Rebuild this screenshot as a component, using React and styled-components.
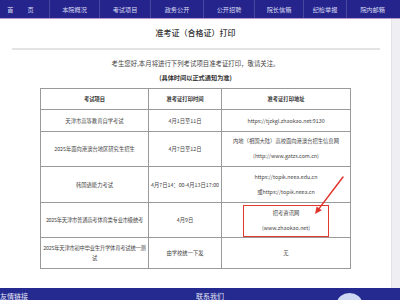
import React from "react";
import styled, { createGlobalStyle } from "styled-components";

const GlobalStyle = createGlobalStyle`
  html, body { margin: 0; padding: 0; background: #ffffff; }
  body {
    width: 400px;
    height: 300px;
    overflow: hidden;
    font-family: "Noto Sans CJK SC", "Noto Sans", sans-serif;
    color: #333;
  }
`;

const Page = styled.div`
  width: 400px;
  height: 300px;
  display: flex;
  flex-direction: column;
  overflow: hidden;
`;

const NavBar = styled.nav`
  height: 18px;
  flex: none;
  display: flex;
  background: #24248c;
  border-bottom: 1px solid #b896c8;
`;

const NavItem = styled.a`
  width: ${(p) => p.$w}px;
  flex: none;
  display: flex;
  align-items: center;
  justify-content: center;
  color: #d9daf2;
  font-size: 6.2px;
  letter-spacing: ${(p) => (p.$wide ? "14px" : "0")};
  text-indent: ${(p) => (p.$wide ? "6px" : "0")};
  border-right: ${(p) => (p.$last ? "none" : "1px solid rgba(255,255,255,0.16)")};
  text-decoration: none;
`;

const Main = styled.div`
  flex: 1;
  display: flex;
  min-height: 0;
`;

const Content = styled.div`
  position: relative;
  width: 391px;
  flex: none;
  background: #fff;
  display: flex;
  flex-direction: column;
`;

const SideStrip = styled.div`
  flex: 1;
  background: #efeff3;
  border-left: 1px solid #e2e2e8;
`;

const Title = styled.h1`
  margin: 0;
  padding: 9px 0 10px;
  font-size: 8px;
  line-height: 10px;
  font-weight: 500;
  text-align: center;
  color: #333;
`;

const Rule = styled.div`
  height: 2px;
  margin: 0 11px 0 12px;
  background: #e3e3e3;
`;

const Notice = styled.p`
  margin: 9px 0 0;
  font-size: 6.4px;
  line-height: 10px;
  text-align: center;
  color: #444;
`;

const Remark = styled.p`
  margin: 4px 0 0;
  font-size: 6.2px;
  line-height: 10px;
  font-weight: 700;
  text-align: center;
  color: #333;
`;

const Table = styled.table`
  margin: 5px auto 0;
  width: 310px;
  table-layout: fixed;
  border-collapse: collapse;
  border: 1px solid #9a9a9a;
`;

const Row = styled.tr`
  height: ${(p) => p.$h}px;
`;

const Cell = styled.td`
  border: 1px solid #9a9a9a;
  padding: 0 ${(p) => (p.$tight ? "1px" : "2px")};
  text-align: center;
  vertical-align: middle;
  font-size: 5.3px;
  letter-spacing: ${(p) => (p.$tight ? "-0.22px" : "0")};
  line-height: ${(p) => (p.$multi ? "15px" : "10px")};
  color: #444;
  white-space: ${(p) => (p.$nowrap ? "nowrap" : "normal")};
  overflow: visible;
`;

const HeadCell = styled(Cell).attrs({ as: "th" })`
  font-weight: 700;
  color: #333;
`;

const Line = styled.span`
  display: block;
`;

const Highlight = styled.div`
  width: 84px;
  margin: 2px auto 0;
  border: 1.5px solid #e0392e;
  line-height: 15px;
`;

const ArrowSvg = styled.svg`
  position: absolute;
  left: 300px;
  top: 150px;
  width: 60px;
  height: 70px;
  pointer-events: none;
`;

const Footer = styled.footer`
  height: 12px;
  flex: none;
  display: grid;
  grid-template-columns: 196px 141px 1fr;
  background: #252a90;
  overflow: hidden;
`;

const FooterTitle = styled.span`
  padding-top: 4px;
  font-size: 7px;
  line-height: 8px;
  color: #e4e6f7;
`;

const FooterBadge = styled.span`
  margin-top: 5px;
  width: 25px;
  height: 20px;
  border-radius: 50%;
  background: #cfd8f2;
`;

const navItems = [
  { t: "首页", w: 49, wide: true },
  { t: "本院概况", w: 49 },
  { t: "考试项目", w: 50 },
  { t: "政务公开", w: 52 },
  { t: "公开招聘", w: 50 },
  { t: "院长信箱", w: 48 },
  { t: "纪检举报", w: 42 },
  { t: "院内邮箱", w: 51, last: true },
];

export default function App() {
  return (
    <>
      <GlobalStyle />
      <Page>
        <NavBar>
          {navItems.map((n) => (
            <NavItem key={n.t} $w={n.w} $wide={n.wide} $last={n.last}>
              {n.t}
            </NavItem>
          ))}
        </NavBar>
        <Main>
          <Content>
            <Title>准考证（合格证）打印</Title>
            <Rule />
            <Notice>考生您好,本月将进行下列考试项目准考证打印，敬请关注。</Notice>
            <Remark>(具体时间以正式通知为准)</Remark>
            <Table>
              <colgroup>
                <col style={{ width: 108 }} />
                <col style={{ width: 73 }} />
                <col style={{ width: 129 }} />
              </colgroup>
              <tbody>
                <Row $h={21}>
                  <HeadCell>考试项目</HeadCell>
                  <HeadCell>准考证打印时间</HeadCell>
                  <HeadCell>准考证打印地址</HeadCell>
                </Row>
                <Row $h={22}>
                  <Cell>天津市高等教育自学考试</Cell>
                  <Cell>4月1日至11日</Cell>
                  <Cell>https://tjzkgl.zhaokao.net:9130</Cell>
                </Row>
                <Row $h={35}>
                  <Cell>2025年面向港澳台地区研究生招生</Cell>
                  <Cell>4月7日至12日</Cell>
                  <Cell $multi>
                    <Line>内地（祖国大陆）高校面向港澳台招生信息网</Line>
                    <Line>(http://www.gatzs.com.cn)</Line>
                  </Cell>
                </Row>
                <Row $h={36}>
                  <Cell>韩国语能力考试</Cell>
                  <Cell $nowrap>4月7日14：00-4月13日17:00</Cell>
                  <Cell $multi>
                    <Line>https://topik.neea.edu.cn</Line>
                    <Line>或https://topik.neea.cn</Line>
                  </Cell>
                </Row>
                <Row $h={35}>
                  <Cell $tight>2025年天津市普通高考体育类专业市级统考</Cell>
                  <Cell>4月9日</Cell>
                  <Cell>
                    <Highlight>
                      <Line>招考资讯网</Line>
                      <Line>(www.zhaokao.net)</Line>
                    </Highlight>
                  </Cell>
                </Row>
                <Row $h={31}>
                  <Cell $tight>2025年天津市初中毕业生升学体育考试统一测试</Cell>
                  <Cell>由学校统一下发</Cell>
                  <Cell>无</Cell>
                </Row>
              </tbody>
            </Table>
            <ArrowSvg viewBox="0 0 60 70">
              <line x1="43" y1="8" x2="19.2" y2="39.4" stroke="#e0352b" strokeWidth="1.5" strokeLinecap="round" />
              <polygon points="15,45 21.8,41.3 16.6,37.4" fill="#e0352b" />
            </ArrowSvg>
          </Content>
          <SideStrip />
        </Main>
        <Footer>
          <FooterTitle>友情链接</FooterTitle>
          <FooterTitle>联系我们</FooterTitle>
          <FooterBadge />
        </Footer>
      </Page>
    </>
  );
}
